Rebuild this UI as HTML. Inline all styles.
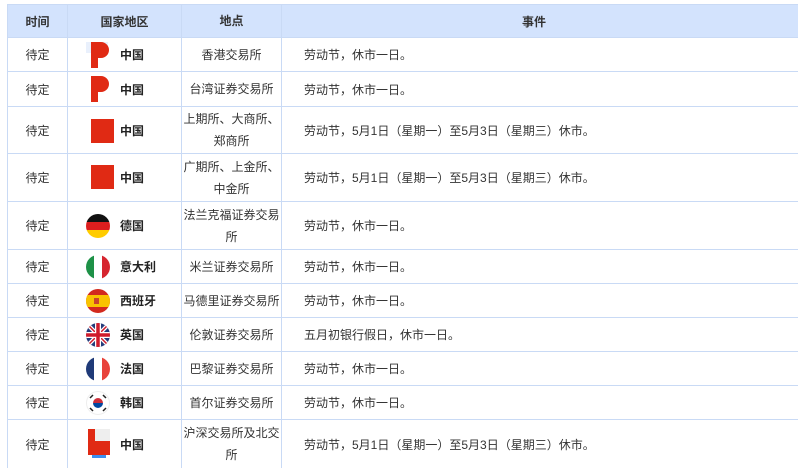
<!DOCTYPE html>
<html><head><meta charset="utf-8"><style>
*{margin:0;padding:0;box-sizing:border-box}
body{width:798px;height:461px;overflow:hidden;background:#fff;font-family:"Liberation Sans","Noto Sans CJK SC",sans-serif;font-size:12px;color:#333}
.t{position:absolute;left:7px;top:4px;width:800px}
.r{position:absolute;left:0;width:800px;border-bottom:1px solid #c9daf5}
.c{position:absolute;top:0;height:100%;display:flex;align-items:center;border-left:1px solid #c9daf5}
.h{background:#d3e3fd;font-weight:bold;color:#333;border-top:1px solid #c9daf5}
.c1{left:0;width:60px;justify-content:center}
.c2{left:60px;width:114px}
.c3{left:174px;width:100px;justify-content:center;text-align:center;line-height:22px}
.c4{left:274px;width:530px;padding-left:22px}
.h .c2,.h .c4{justify-content:center}
.h .c4{padding-left:0;padding-right:25px}
.fl{position:absolute;left:18px;width:24px;height:24px}
.cn{position:absolute;left:18px;width:28px;height:30px}
.nm{position:absolute;left:52px;font-weight:bold;color:#222}
</style></head><body>
<div class="t">
<div class="r h" style="top:0;height:34px"><div class="c c1">时间</div><div class="c c2">国家地区</div><div class="c c3">地点</div><div class="c c4">事件</div></div>

<div class="r" style="top:34px;height:34px"><div class="c c1">待定</div><div class="c c2"><svg class="cn" viewBox="0 0 28 30"><rect x="0" y="2" width="22" height="11" fill="#e9f0fc"/><path d="M5 2h10a8 8 0 0 1 0 16h-3v10H5z" fill="#e02a14"/></svg><span class="nm">中国</span></div><div class="c c3">香港交易所</div><div class="c c4">劳动节，休市一日。</div></div>

<div class="r" style="top:68px;height:35px"><div class="c c1">待定</div><div class="c c2"><svg class="cn" viewBox="0 0 28 30"><path d="M5 2h10a8 8 0 0 1 0 16h-3v10H5z" fill="#e02a14"/></svg><span class="nm">中国</span></div><div class="c c3">台湾证券交易所</div><div class="c c4">劳动节，休市一日。</div></div>

<div class="r" style="top:103px;height:47px"><div class="c c1">待定</div><div class="c c2"><svg class="cn" viewBox="0 0 28 30"><rect x="5" y="4" width="24" height="24" fill="#e02a14"/></svg><span class="nm">中国</span></div><div class="c c3">上期所、大商所、<br>郑商所</div><div class="c c4">劳动节，5月1日（星期一）至5月3日（星期三）休市。</div></div>

<div class="r" style="top:150px;height:48px"><div class="c c1">待定</div><div class="c c2"><svg class="cn" viewBox="0 0 28 30"><rect x="5" y="2" width="23" height="24" fill="#e02a14"/></svg><span class="nm">中国</span></div><div class="c c3">广期所、上金所、<br>中金所</div><div class="c c4">劳动节，5月1日（星期一）至5月3日（星期三）休市。</div></div>

<div class="r" style="top:198px;height:48px"><div class="c c1">待定</div><div class="c c2"><svg class="fl" viewBox="0 0 24 24"><clipPath id="k"><circle cx="12" cy="12" r="12"/></clipPath><g clip-path="url(#k)"><rect width="24" height="8" fill="#111"/><rect y="8" width="24" height="8" fill="#dd1e1e"/><rect y="16" width="24" height="8" fill="#ffcc00"/></g></svg><span class="nm">德国</span></div><div class="c c3">法兰克福证券交易<br>所</div><div class="c c4">劳动节，休市一日。</div></div>

<div class="r" style="top:246px;height:34px"><div class="c c1">待定</div><div class="c c2"><svg class="fl" viewBox="0 0 24 24"><clipPath id="i"><circle cx="12" cy="12" r="12"/></clipPath><g clip-path="url(#i)"><rect width="8" height="24" fill="#1e9147"/><rect x="8" width="8" height="24" fill="#fff"/><rect x="16" width="8" height="24" fill="#d6252f"/></g></svg><span class="nm">意大利</span></div><div class="c c3">米兰证券交易所</div><div class="c c4">劳动节，休市一日。</div></div>

<div class="r" style="top:280px;height:34px"><div class="c c1">待定</div><div class="c c2"><svg class="fl" viewBox="0 0 24 24"><clipPath id="s"><circle cx="12" cy="12" r="12"/></clipPath><g clip-path="url(#s)"><rect width="24" height="24" fill="#d22a1e"/><rect y="6" width="24" height="12" fill="#f9c300"/><rect x="8" y="9" width="5" height="6" fill="#c9452c"/></g></svg><span class="nm">西班牙</span></div><div class="c c3">马德里证券交易所</div><div class="c c4">劳动节，休市一日。</div></div>

<div class="r" style="top:314px;height:34px"><div class="c c1">待定</div><div class="c c2"><svg class="fl" viewBox="0 0 24 24"><clipPath id="u"><circle cx="12" cy="12" r="12"/></clipPath><g clip-path="url(#u)"><rect width="24" height="24" fill="#243b7a"/><path d="M0 0L24 24M24 0L0 24" stroke="#fff" stroke-width="4"/><path d="M0 0L24 24M24 0L0 24" stroke="#cf1b2b" stroke-width="1.5"/><path d="M12 0V24M0 12H24" stroke="#fff" stroke-width="6"/><path d="M12 0V24M0 12H24" stroke="#cf1b2b" stroke-width="3.5"/></g></svg><span class="nm">英国</span></div><div class="c c3">伦敦证券交易所</div><div class="c c4">五月初银行假日，休市一日。</div></div>

<div class="r" style="top:348px;height:34px"><div class="c c1">待定</div><div class="c c2"><svg class="fl" viewBox="0 0 24 24"><clipPath id="f"><circle cx="12" cy="12" r="12"/></clipPath><g clip-path="url(#f)"><rect width="8" height="24" fill="#1f3a78"/><rect x="8" width="8" height="24" fill="#fff"/><rect x="16" width="8" height="24" fill="#e8423b"/></g></svg><span class="nm">法国</span></div><div class="c c3">巴黎证券交易所</div><div class="c c4">劳动节，休市一日。</div></div>

<div class="r" style="top:382px;height:34px"><div class="c c1">待定</div><div class="c c2"><svg class="fl" viewBox="0 0 24 24"><circle cx="12" cy="12" r="11.5" fill="#fff" stroke="#eee"/><path d="M7 12a5 5 0 0 1 10 0z" fill="#cd2e3a"/><path d="M7 12a5 5 0 0 0 10 0z" fill="#0047a0"/><g stroke="#222" stroke-width="1.5"><path d="M4 7l3-3M17 4l3 3M4 17l3 3M17 20l3-3"/></g></svg><span class="nm">韩国</span></div><div class="c c3">首尔证券交易所</div><div class="c c4">劳动节，休市一日。</div></div>

<div class="r" style="top:416px;height:48px;border-bottom:none"><div class="c c1">待定</div><div class="c c2"><svg class="fl" viewBox="0 0 24 30" style="height:30px"><rect x="2" y="0" width="22" height="26" fill="#eee"/><path d="M2 0h7v12h15v14H2z" fill="#e02a14"/><rect x="6" y="26" width="14" height="3" fill="#3b8ff0"/></svg><span class="nm">中国</span></div><div class="c c3">沪深交易所及北交<br>所</div><div class="c c4">劳动节，5月1日（星期一）至5月3日（星期三）休市。</div></div>
</div>
</body></html>
